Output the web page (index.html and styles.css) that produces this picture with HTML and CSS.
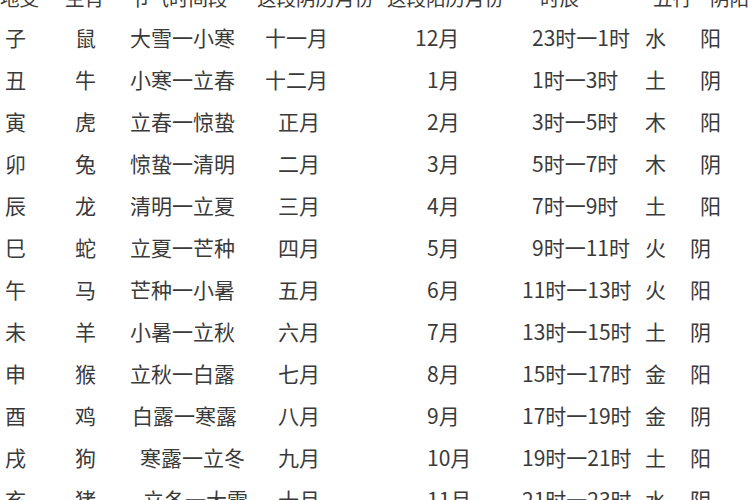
FILE: index.html
```html
<!DOCTYPE html>
<html lang="zh-CN">
<head>
<meta charset="utf-8">
<title>地支表</title>
<link rel="stylesheet" href="styles.css">
</head>
<body>
<div class="table">
  <div class="row head">
    <div>地支</div><div>生肖</div><div>节气时间段</div><div>这段阴历月份</div><div>这段阳历月份</div><div>时辰</div><div>五行</div><div>阴阳</div>
  </div>
  <div class="row">
    <div>子</div><div>鼠</div><div>大雪一小寒</div><div>十一月</div><div>12月</div><div class="s1">23时一1时</div><div>水</div><div class="y1">阳</div>
  </div>
  <div class="row">
    <div>丑</div><div>牛</div><div>小寒一立春</div><div>十二月</div><div class="m1">1月</div><div class="s1">1时一3时</div><div>土</div><div class="y1">阴</div>
  </div>
  <div class="row">
    <div>寅</div><div>虎</div><div>立春一惊蛰</div><div class="n1">正月</div><div class="m1">2月</div><div class="s1">3时一5时</div><div>木</div><div class="y1">阳</div>
  </div>
  <div class="row">
    <div>卯</div><div>兔</div><div>惊蛰一清明</div><div class="n1">二月</div><div class="m1">3月</div><div class="s1">5时一7时</div><div>木</div><div class="y1">阴</div>
  </div>
  <div class="row">
    <div>辰</div><div>龙</div><div>清明一立夏</div><div class="n1">三月</div><div class="m1">4月</div><div class="s1">7时一9时</div><div>土</div><div class="y1">阳</div>
  </div>
  <div class="row">
    <div>巳</div><div>蛇</div><div>立夏一芒种</div><div class="n1">四月</div><div class="m1">5月</div><div class="s1">9时一11时</div><div>火</div><div>阴</div>
  </div>
  <div class="row">
    <div>午</div><div>马</div><div>芒种一小暑</div><div class="n1">五月</div><div class="m1">6月</div><div>11时一13时</div><div>火</div><div>阳</div>
  </div>
  <div class="row">
    <div>未</div><div>羊</div><div>小暑一立秋</div><div class="n1">六月</div><div class="m1">7月</div><div>13时一15时</div><div>土</div><div>阴</div>
  </div>
  <div class="row">
    <div>申</div><div>猴</div><div>立秋一白露</div><div class="n1">七月</div><div class="m1">8月</div><div>15时一17时</div><div>金</div><div>阳</div>
  </div>
  <div class="row">
    <div>酉</div><div>鸡</div><div class="t1">白露一寒露</div><div class="n1">八月</div><div class="m1">9月</div><div>17时一19时</div><div>金</div><div>阴</div>
  </div>
  <div class="row">
    <div>戌</div><div>狗</div><div class="t2">寒露一立冬</div><div class="n1">九月</div><div class="m1">10月</div><div>19时一21时</div><div>土</div><div>阳</div>
  </div>
  <div class="row">
    <div>亥</div><div>猪</div><div class="t3">立冬一大雪</div><div class="n1">十月</div><div class="m1">11月</div><div>21时一23时</div><div>水</div><div>阴</div>
  </div>
</div>
</body>
</html>
```
FILE: styles.css
```css
html, body {
  margin: 0;
  padding: 0;
  background: #ffffff;
  overflow: hidden;
}
body {
  width: 750px;
  height: 500px;
  font-family: "Noto Sans CJK SC", "Noto Sans", sans-serif;
  font-size: 21px;
  color: #3a3a3a;
}
.table {
  margin-top: -20px;
}
.row {
  display: grid;
  grid-template-columns: 70px 55px 135px 150px 107px 123px 45px 1fr;
  padding-left: 5px;
  height: 42px;
  line-height: 42px;
  white-space: nowrap;
}
.row.head {
  grid-template-columns: 65px 65px 127px 130px 153px 113px 57px 1fr;
  padding-left: 0;
  height: 36px;
  line-height: 36px;
  font-size: 19.5px;
}
.s1 { padding-left: 10px; }
.y1 { padding-left: 10px; }
.m1 { padding-left: 12px; }
.n1 { padding-left: 13px; }
.t1 { padding-left: 2px; }
.t2 { padding-left: 10px; }
.t3 { padding-left: 13px; }
```
